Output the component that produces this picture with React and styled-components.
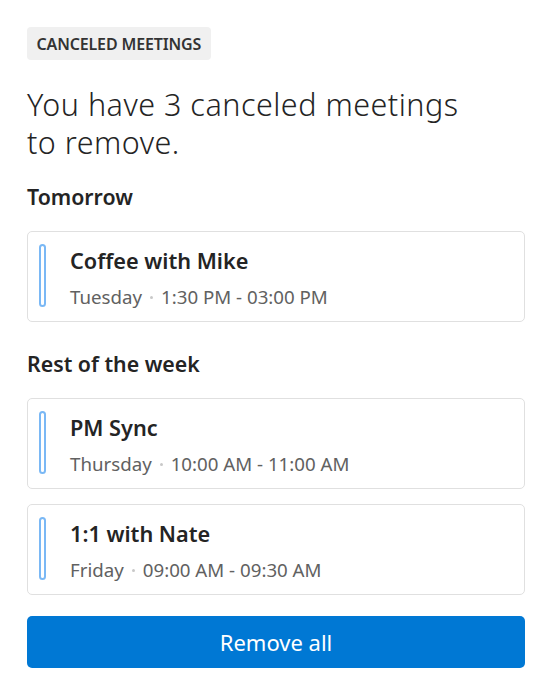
import styled, { createGlobalStyle } from "styled-components";

// meetings to clean up, grouped by when they were scheduled
const groups = [
  {
    label: "Tomorrow",
    meetings: [{ id: 1, title: "Coffee with Mike", day: "Tuesday", time: "1:30 PM - 03:00 PM" }],
  },
  {
    label: "Rest of the week",
    meetings: [
      { id: 2, title: "PM Sync", day: "Thursday", time: "10:00 AM - 11:00 AM" },
      { id: 3, title: "1:1 with Nate", day: "Friday", time: "09:00 AM - 09:30 AM" },
    ],
  },
];

const GlobalStyle = createGlobalStyle`
  body {
    margin: 0;
    background: #ffffff;
    font-family: "Noto Sans", "Open Sans", sans-serif;
    color: #242424;
  }
`;

const Panel = styled.div`
  width: 551px;
  height: 696px;
  box-sizing: border-box;
  padding: 27px 26px 0 27px;
  display: flex;
  flex-direction: column;
`;

const Badge = styled.span`
  align-self: flex-start;
  height: 33px;
  padding: 0 9.5px;
  display: flex;
  align-items: center;
  background: #f0f0f0;
  border-radius: 4px;
  font-size: 16px;
  font-weight: 600;
  letter-spacing: -0.15px;
  color: #333333;
  text-transform: uppercase;
`;

const Title = styled.h1`
  margin: 24.6px 0 0;
  font-size: 30.5px;
  font-weight: 300;
  line-height: 38.5px;
  letter-spacing: 0.5px;
  color: #242424;
`;

const SectionLabel = styled.h2`
  margin: ${({ first }) => (first ? "21px 0 20.3px" : "28.4px 0 19.6px")};
  font-size: 21.3px;
  font-weight: 600;
  line-height: 28px;
  color: #242424;
`;

const List = styled.div`
  display: flex;
  flex-direction: column;
  gap: 15px;
`;

const Card = styled.div`
  height: 91px;
  box-sizing: border-box;
  border: 1px solid #e0e0e0;
  border-radius: 5px;
  display: flex;
  align-items: flex-start;
  gap: 24px;
`;

const Accent = styled.div`
  width: 7px;
  height: 63px;
  flex: none;
  margin: 12.5px 0 0 11px;
  box-sizing: border-box;
  border: 2px solid #7ab8f5;
  border-radius: 4px;
`;

const Info = styled.div`
  padding-top: 15.6px;
  display: flex;
  flex-direction: column;
  gap: 9.1px;
`;

const MeetingTitle = styled.div`
  font-size: 21.7px;
  font-weight: 600;
  line-height: 28px;
  color: #242424;
`;

const When = styled.div`
  display: flex;
  align-items: center;
  font-size: 18.7px;
  line-height: 24px;
  color: #616161;
`;

const Dot = styled.span`
  width: 3px;
  height: 3px;
  margin: 2px 8px 0;
  border-radius: 50%;
  background: #c8c8c8;
`;

const RemoveButton = styled.button`
  margin-top: 21px;
  height: 52px;
  border: none;
  border-radius: 5px;
  background: #0078d4;
  color: #ffffff;
  font-family: inherit;
  font-size: 22px;
  cursor: pointer;

  &:hover {
    background: #106ebe;
  }
`;

export default function App() {
  return (
    <>
      <GlobalStyle />
      <Panel>
        <Badge>Canceled meetings</Badge>
        <Title>
          You have 3 canceled meetings
          <br />
          to remove.
        </Title>
        {groups.map((group, i) => (
          <div key={group.label}>
            <SectionLabel first={i === 0}>{group.label}</SectionLabel>
            <List>
              {group.meetings.map((m) => (
                <Card key={m.id}>
                  <Accent />
                  <Info>
                    <MeetingTitle>{m.title}</MeetingTitle>
                    <When>
                      {m.day}
                      <Dot />
                      {m.time}
                    </When>
                  </Info>
                </Card>
              ))}
            </List>
          </div>
        ))}
        <RemoveButton>Remove all</RemoveButton>
      </Panel>
    </>
  );
}
